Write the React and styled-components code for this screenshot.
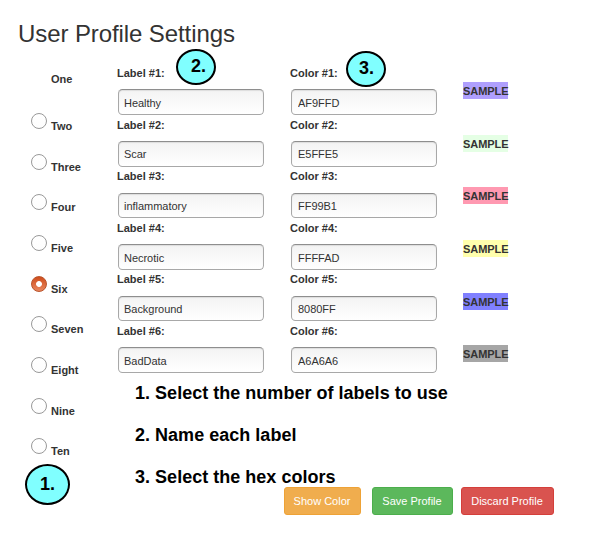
import React, { useState } from "react";
import styled, { createGlobalStyle } from "styled-components";

const GlobalStyle = createGlobalStyle`
  * { box-sizing: border-box; }
  body {
    margin: 0;
    background: #fff;
    color: #333;
    font: 11px/16px "Liberation Sans", Arial, sans-serif;
  }
`;

const Page = styled.main`
  position: relative;
  width: 603px;
  height: 536px;
  overflow: hidden;
`;

const Title = styled.h1`
  margin: 0;
  padding: 19px 0 0 18px;
  height: 64px;
  font-size: 24px;
  font-weight: 400;
  letter-spacing: -0.09px;
  line-height: 30px;
  white-space: nowrap;
`;

const Columns = styled.form`
  display: grid;
  grid-template-columns: 86px 173px 173px 60px;
  padding-left: 31px;
  height: 423px;
`;

const RadioList = styled.div`
  display: flex;
  flex-direction: column;
  padding-top: 7px;
`;

const RadioOption = styled.label`
  display: flex;
  flex: none;
  gap: 4px;
  height: ${(p) => (p.$bare ? "42px" : "40.67px")};
  padding-left: ${(p) => (p.$bare ? "20px" : "0")};
  font-weight: 700;
`;

const RadioText = styled.span`
  padding-top: ${(p) => (p.$bare ? "0" : "5px")};
`;

const Radio = styled.input`
  appearance: none;
  flex: none;
  width: 16px;
  height: 16px;
  margin: 0;
  border: 1px solid #999;
  border-radius: 50%;
  background: linear-gradient(#fff, #fdfdfd);
  &:checked {
    border-color: #b9532b;
    background: radial-gradient(circle, #fff 0 2.5px, transparent 3.3px),
      linear-gradient(#cf4d1c, #e9875f);
  }
`;

const FieldList = styled.div`
  padding-top: 1px;
`;

const Field = styled.label`
  display: flex;
  flex-direction: column;
  gap: 8.4px;
  height: 51.6px;
  font-weight: 700;
`;

const TextInput = styled.input`
  width: 146px;
  height: 25.6px;
  margin: 0 0 0 1px;
  padding: 1.4px 6px 0 ${(p) => p.$inset}px;
  border: 1px solid #a8a8a8;
  border-top-color: #8e8e8e;
  border-radius: 4.5px;
  outline: none;
  background: linear-gradient(#f3f3f3, #fff);
  box-shadow: inset 0 1px 1px #ddd;
  color: #333;
  font: 11px "Liberation Sans", Arial, sans-serif;
  letter-spacing: -0.03px;
`;

const SampleList = styled.div`
  padding-top: 18px;
`;

const SampleCell = styled.div`
  height: 52.65px;
`;

const Sample = styled.span`
  display: block;
  width: 45px;
  height: 17px;
  line-height: 18px;
  background: ${(p) => p.$color};
  font-weight: 700;
  letter-spacing: -0.06px;
`;

const Actions = styled.div`
  display: flex;
  padding-left: 284px;
`;

const Button = styled.button`
  width: ${(p) => p.$width}px;
  height: 28px;
  margin: 0 ${(p) => p.$gap || 0}px 0 0;
  padding: 0 1px 0 0;
  border: 1px solid ${(p) => p.$edge};
  border-radius: 3px;
  background: ${(p) => p.$fill};
  color: #fff;
  font: 11px "Liberation Sans", Arial, sans-serif;
  white-space: nowrap;
`;

const Badge = styled.div`
  position: absolute;
  left: ${(p) => p.$x}px;
  top: ${(p) => p.$y}px;
  width: ${(p) => p.$w}px;
  height: ${(p) => p.$h}px;
  padding-left: ${(p) => p.$shift || 0}px;
  border: 2px solid #000;
  border-radius: 50%;
  background: #80ffff;
  color: #000;
  font-size: 18px;
  font-weight: 700;
  line-height: ${(p) => p.$line}px;
  text-align: center;
`;

const Notes = styled.ol`
  position: absolute;
  left: 135px;
  top: 372px;
  margin: 0;
  padding: 0;
  list-style: none;
  color: #000;
  font-size: 18px;
  font-weight: 700;
  letter-spacing: 0.02px;
  line-height: 42px;
  white-space: nowrap;
  pointer-events: none;
`;

const counts = ["One", "Two", "Three", "Four", "Five", "Six", "Seven", "Eight", "Nine", "Ten"];

const initialRows = [
  { label: "Healthy", color: "AF9FFD" },
  { label: "Scar", color: "E5FFE5" },
  { label: "inflammatory", color: "FF99B1" },
  { label: "Necrotic", color: "FFFFAD" },
  { label: "Background", color: "8080FF" },
  { label: "BadData", color: "A6A6A6" },
];

const fieldColumns = [
  { caption: "Label", key: "label", inset: 5 },
  { caption: "Color", key: "color", inset: 6 },
];

export default function App() {
  const [count, setCount] = useState("Six");
  const [rows, setRows] = useState(initialRows);
  const update = (index, key, value) =>
    setRows(rows.map((row, i) => (i === index ? { ...row, [key]: value } : row)));

  return (
    <>
      <GlobalStyle />
      <Page>
        <Title>User Profile Settings</Title>
        <Columns>
          <RadioList>
            {counts.map((name, i) => (
              <RadioOption key={name} $bare={i === 0}>
                {i > 0 && (
                  <Radio
                    type="radio"
                    name="count"
                    checked={count === name}
                    onChange={() => setCount(name)}
                  />
                )}
                <RadioText $bare={i === 0}>{name}</RadioText>
              </RadioOption>
            ))}
          </RadioList>
          {fieldColumns.map(({ caption, key, inset }) => (
            <FieldList key={key}>
              {rows.map((row, i) => (
                <Field key={i}>
                  {`${caption} #${i + 1}:`}
                  <TextInput
                    $inset={inset}
                    value={row[key]}
                    onChange={(e) => update(i, key, e.target.value)}
                  />
                </Field>
              ))}
            </FieldList>
          ))}
          <SampleList>
            {rows.map((row, i) => (
              <SampleCell key={i}>
                <Sample $color={`#${row.color}`}>SAMPLE</Sample>
              </SampleCell>
            ))}
          </SampleList>
        </Columns>
        <Actions>
          <Button type="button" $width={77} $gap={11} $fill="#f0ad4e" $edge="#eea236">Show Color</Button>
          <Button type="button" $width={81} $gap={8} $fill="#5cb85c" $edge="#4cae4c">Save Profile</Button>
          <Button type="button" $width={93} $fill="#d9534f" $edge="#d43f3a">Discard Profile</Button>
        </Actions>
        <Badge $x={25} $y={464} $w={45} $h={41} $line={36}>1.</Badge>
        <Badge $x={176} $y={49} $w={40} $h={36} $line={30} $shift={5}>2.</Badge>
        <Badge $x={346} $y={51} $w={40} $h={36} $line={30} $shift={1}>3.</Badge>
        <Notes>
          <li>1. Select the number of labels to use</li>
          <li>2. Name each label</li>
          <li>3. Select the hex colors</li>
        </Notes>
      </Page>
    </>
  );
}
